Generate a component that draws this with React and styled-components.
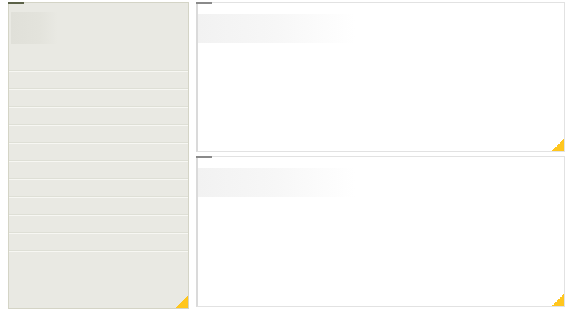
import React from 'react';
import styled, { createGlobalStyle } from 'styled-components';

const Global = createGlobalStyle`
    html, body { margin: 0; padding: 0; background: #fff; }
    body { font-family: "Liberation Sans", Arial, sans-serif; }
`;

const Page = styled.div`
    display: flex;
    gap: 7px;
    padding: 2px 0 0 8px;
    width: 568px;
    height: 313px;
    box-sizing: border-box;
`;

const Corner = styled.div`
    position: absolute;
    right: 0;
    bottom: 0;
    width: 12px;
    height: 12px;
    background: linear-gradient(135deg, transparent 50%, #ffc61e 50%);
`;

const Accent = styled.div`
    position: absolute;
    left: ${p => (p.$wide ? -2 : -1)}px;
    top: -1px;
    width: 16px;
    height: 2px;
    background: ${p => p.$color};
`;

const SidePanel = styled.aside`
    position: relative;
    width: 181px;
    height: 307px;
    box-sizing: border-box;
    background: #e9e9e3;
    border: 1px solid #d4d4c6;
    display: flex;
    flex-direction: column;
`;

const SideHeader = styled.div`
    height: 67px;
    padding: 9px 0 0 2px;
    box-sizing: border-box;
`;

const SideThumb = styled.div`
    width: 47px;
    height: 32px;
    background: linear-gradient(90deg, #e0e0d9 0%, #e3e3dc 60%, #e9e9e3 100%);
`;

const SideRow = styled.div`
    height: 18px;
    box-sizing: border-box;
    border-top: 1px solid #dedfd6;
    box-shadow: inset 0 1px 0 #f7f7f3;
`;

const Column = styled.div`
    display: flex;
    flex-direction: column;
    gap: 4px;
    width: 369px;
`;

const Card = styled.section`
    position: relative;
    height: ${p => p.$h}px;
    box-sizing: border-box;
    background: #fff;
    border: 1px solid #e2e2e2;
    border-left: 2px solid #dadada;
    padding-top: 11px;
`;

const CardThumb = styled.div`
    width: 157px;
    height: 29px;
    background: linear-gradient(90deg, #f2f2f2 0%, #f7f7f7 50%, #ffffff 100%);
`;

export default function App() {
    return (
        <>
            <Global />
            <Page>
                <SidePanel>
                    <Accent $color="#5c6248" />
                    <SideHeader>
                        <SideThumb />
                    </SideHeader>
                    {Array.from({ length: 11 }).map((_, i) => (
                        <SideRow key={i} />
                    ))}
                    <Corner />
                </SidePanel>
                <Column>
                    <Card $h={150}>
                        <Accent $wide $color="#8a8a8a" />
                        <CardThumb />
                        <Corner />
                    </Card>
                    <Card $h={151}>
                        <Accent $wide $color="#8a8a8a" />
                        <CardThumb />
                        <Corner />
                    </Card>
                </Column>
            </Page>
        </>
    );
}
